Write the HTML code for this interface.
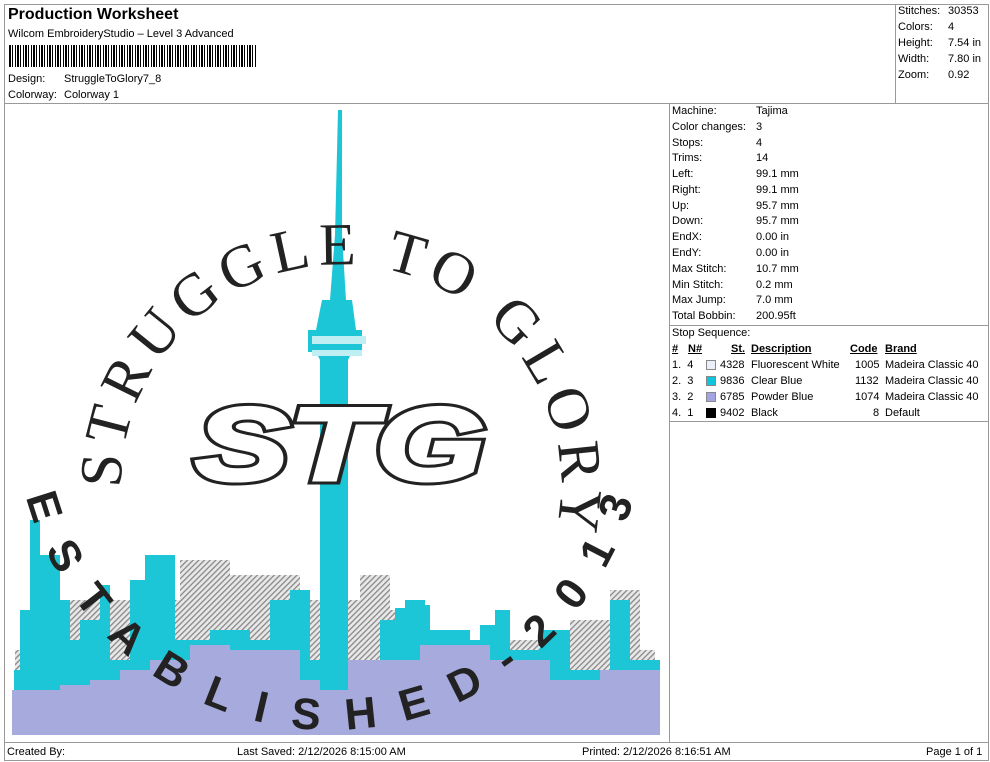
<!DOCTYPE html>
<html><head><meta charset="utf-8"><style>
*{margin:0;padding:0;box-sizing:border-box}
body{width:990px;height:762px;background:#fff;font-family:"Liberation Sans",Arial,sans-serif;font-size:11px;color:#000;position:relative;overflow:hidden}
.a{position:absolute;white-space:nowrap}
.ln{position:absolute;background:#999}
.row{position:absolute;left:672px;height:16px;width:300px;white-space:nowrap;top:0}
.row span{position:absolute;left:84px;white-space:nowrap}
</style></head><body>
<div class="ln" style="left:4px;top:4px;width:985px;height:1px"></div>
<div class="ln" style="left:4px;top:4px;width:1px;height:757px"></div>
<div class="ln" style="left:988px;top:4px;width:1px;height:757px"></div>
<div class="ln" style="left:4px;top:760px;width:985px;height:1px"></div>
<div class="ln" style="left:4px;top:103px;width:985px;height:1px"></div>
<div class="ln" style="left:895px;top:4px;width:1px;height:100px"></div>
<div class="ln" style="left:669px;top:104px;width:1px;height:638px"></div>
<div class="ln" style="left:4px;top:742px;width:985px;height:1px"></div>
<div class="ln" style="left:669px;top:325px;width:320px;height:1px"></div>
<div class="ln" style="left:669px;top:421px;width:320px;height:1px"></div>

<div class="a" style="left:8px;top:6px;font-size:16px;font-weight:bold">Production Worksheet</div>
<div class="a" style="left:8px;top:28px">Wilcom EmbroideryStudio – Level 3 Advanced</div>
<div class="a" style="left:9px;top:45px;width:247px;height:22px;background:repeating-linear-gradient(90deg,#000 0 2px,#fff 2px 3px,#000 3px 4px,#fff 4px 6px,#000 6px 7px,#fff 7px 8px)"></div>
<div class="a" style="left:8px;top:73px">Design:</div><div class="a" style="left:64px;top:73px">StruggleToGlory7_8</div>
<div class="a" style="left:8px;top:89px">Colorway:</div><div class="a" style="left:64px;top:89px">Colorway 1</div>

<div class="a" style="left:898px;top:5px">Stitches:</div><div class="a" style="left:948px;top:5px">30353</div>
<div class="a" style="left:898px;top:21px">Colors:</div><div class="a" style="left:948px;top:21px">4</div>
<div class="a" style="left:898px;top:37px">Height:</div><div class="a" style="left:948px;top:37px">7.54 in</div>
<div class="a" style="left:898px;top:53px">Width:</div><div class="a" style="left:948px;top:53px">7.80 in</div>
<div class="a" style="left:898px;top:69px">Zoom:</div><div class="a" style="left:948px;top:69px">0.92</div>

<div class="row" style="top:105px">Machine:<span>Tajima</span></div>
<div class="row" style="top:121px">Color changes:<span>3</span></div>
<div class="row" style="top:137px">Stops:<span>4</span></div>
<div class="row" style="top:152px">Trims:<span>14</span></div>
<div class="row" style="top:168px">Left:<span>99.1 mm</span></div>
<div class="row" style="top:184px">Right:<span>99.1 mm</span></div>
<div class="row" style="top:200px">Up:<span>95.7 mm</span></div>
<div class="row" style="top:215px">Down:<span>95.7 mm</span></div>
<div class="row" style="top:231px">EndX:<span>0.00 in</span></div>
<div class="row" style="top:247px">EndY:<span>0.00 in</span></div>
<div class="row" style="top:263px">Max Stitch:<span>10.7 mm</span></div>
<div class="row" style="top:279px">Min Stitch:<span>0.2 mm</span></div>
<div class="row" style="top:294px">Max Jump:<span>7.0 mm</span></div>
<div class="row" style="top:310px">Total Bobbin:<span>200.95ft</span></div>

<div class="a" style="left:672px;top:327px">Stop Sequence:</div>
<div class="a" style="left:672px;top:343px;font-weight:bold;text-decoration:underline">#</div>
<div class="a" style="left:688px;top:343px;font-weight:bold;text-decoration:underline">N#</div>
<div class="a" style="left:731px;top:343px;font-weight:bold;text-decoration:underline">St.</div>
<div class="a" style="left:751px;top:343px;font-weight:bold;text-decoration:underline">Description</div>
<div class="a" style="left:850px;top:343px;font-weight:bold;text-decoration:underline">Code</div>
<div class="a" style="left:885px;top:343px;font-weight:bold;text-decoration:underline">Brand</div>
<div class="a" style="left:672px;top:359px">1.&nbsp; 4</div><div class="a" style="left:706px;top:360px;width:10px;height:10px;background:#eceef8;border:1px solid #888"></div><div class="a" style="left:720px;top:359px">4328</div><div class="a" style="left:751px;top:359px">Fluorescent White</div><div class="a" style="left:855px;top:359px">1005</div><div class="a" style="left:885px;top:359px">Madeira Classic 40</div>
<div class="a" style="left:672px;top:375px">2.&nbsp; 3</div><div class="a" style="left:706px;top:376px;width:10px;height:10px;background:#10c4dc;border:1px solid #888"></div><div class="a" style="left:720px;top:375px">9836</div><div class="a" style="left:751px;top:375px">Clear Blue</div><div class="a" style="left:855px;top:375px">1132</div><div class="a" style="left:885px;top:375px">Madeira Classic 40</div>
<div class="a" style="left:672px;top:391px">3.&nbsp; 2</div><div class="a" style="left:706px;top:392px;width:10px;height:10px;background:#a4a4e4;border:1px solid #888"></div><div class="a" style="left:720px;top:391px">6785</div><div class="a" style="left:751px;top:391px">Powder Blue</div><div class="a" style="left:855px;top:391px">1074</div><div class="a" style="left:885px;top:391px">Madeira Classic 40</div>
<div class="a" style="left:672px;top:407px">4.&nbsp; 1</div><div class="a" style="left:706px;top:408px;width:10px;height:10px;background:#000"></div><div class="a" style="left:720px;top:407px">9402</div><div class="a" style="left:751px;top:407px">Black</div><div class="a" style="left:873px;top:407px">8</div><div class="a" style="left:885px;top:407px">Default</div>

<div class="a" style="left:7px;top:746px">Created By:</div>
<div class="a" style="left:237px;top:746px">Last Saved: 2/12/2026 8:15:00 AM</div>
<div class="a" style="left:582px;top:746px">Printed: 2/12/2026 8:16:51 AM</div>
<div class="a" style="left:926px;top:746px">Page 1 of 1</div>

<svg class="a" style="left:0;top:0" width="670" height="742" viewBox="0 0 670 742">
<defs>
<pattern id="h" width="4" height="4" patternUnits="userSpaceOnUse" patternTransform="rotate(45)"><rect width="4" height="4" fill="#e8e8e8"/><rect width="1.3" height="4" fill="#888"/></pattern>
<path id="top" d="M121,488 A220,220 0 1 1 551,550"/>
<path id="bot" d="M26,497 A315,315 0 0 0 637,486"/>
</defs>
<path fill="url(#h)" d="M15,640 V650 H60 V640 H65 V600 H180 V560 H230 V575 H300 V600 H360 V575 H390 V610 H420 V640 H570 V620 H610 V590 H640 V650 H655 V700 H15Z"/>
<path fill="#1cc6d6" d="M14,700 V670 H20 V610 H30 V520 H40 V555 H60 V600 H70 V640 H80 V620 H100 V585 H110 V660 H130 V580 H145 V555 H175 V640 H210 V630 H250 V640 H270 V600 H290 V590 H310 V660 H380 V620 H395 V608 H405 V600 H425 V605 H430 V630 H470 V640 H480 V625 H495 V610 H510 V650 H540 V630 H570 V670 H610 V600 H630 V660 H660 V700Z"/>
<path fill="#a6aadc" d="M12,735 V690 H60 V685 H90 V680 H120 V670 H150 V660 H190 V645 H230 V650 H300 V680 H330 V660 H420 V645 H490 V660 H550 V680 H600 V670 H660 V735Z"/>
<path fill="#1cc6d6" d="M338,110 H342 V235 L346,300 H352 L356,330 H362 V352 H352 L348,360 V690 H320 V360 L316,352 H308 V330 H316 L322,300 H330 L335,235Z"/>
<rect x="312" y="336" width="54" height="8" fill="#bfeef3"/>
<rect x="312" y="350" width="50" height="6" fill="#bfeef3"/>
<g font-family="Liberation Sans,sans-serif" font-weight="bold" font-style="italic" font-size="104">
<text x="195" y="480" fill="#fff" stroke="#222" stroke-width="9" textLength="290" lengthAdjust="spacingAndGlyphs">STG</text>
<text x="195" y="480" fill="#fff" stroke="#fff" stroke-width="3" textLength="290" lengthAdjust="spacingAndGlyphs">STG</text>
</g>
<text font-family="Liberation Serif,serif" font-size="60" fill="#222"><textPath href="#top" textLength="740" lengthAdjust="spacing">STRUGGLE TO GLORY</textPath></text>
<text font-family="Liberation Sans,sans-serif" font-weight="bold" font-size="44" fill="#222"><textPath href="#bot" textLength="820" lengthAdjust="spacing">ESTABLISHED-2013</textPath></text>
</svg>
</body></html>
